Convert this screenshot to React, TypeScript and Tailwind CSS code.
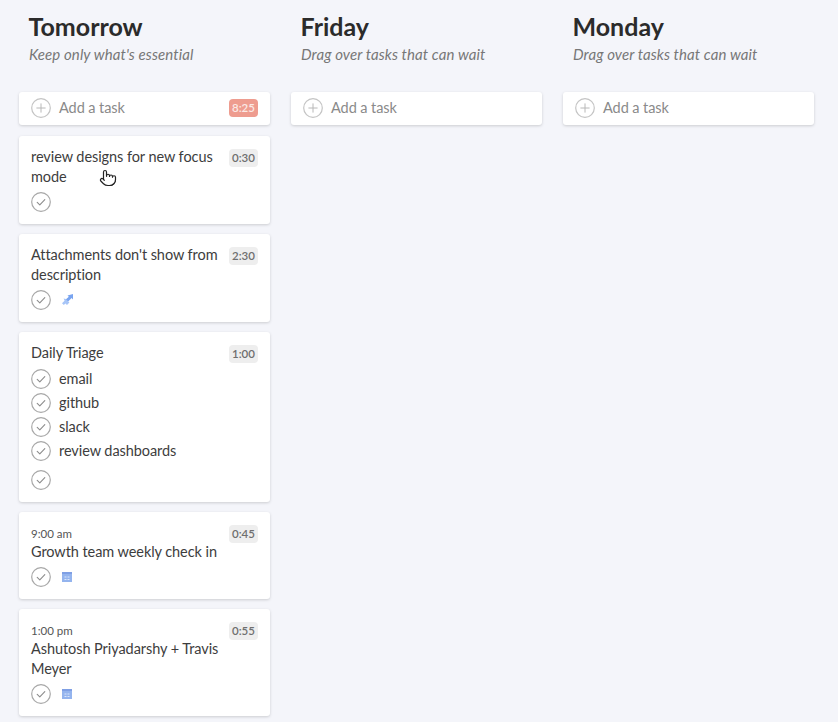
import React from 'react';
import { Pointer } from 'lucide-react';

type Task = {
  title: string;
  time: string;
  at?: string;
  icon?: 'jira' | 'calendar';
  subtasks?: string[];
};

const tomorrow: Task[] = [
  { title: 'review designs for new focus mode', time: '0:30' },
  { title: "Attachments don't show from description", time: '2:30', icon: 'jira' },
  { title: 'Daily Triage', time: '1:00', subtasks: ['email', 'github', 'slack', 'review dashboards'] },
  { title: 'Growth team weekly check in', time: '0:45', at: '9:00 am', icon: 'calendar' },
  { title: 'Ashutosh Priyadarshy + Travis Meyer', time: '0:55', at: '1:00 pm', icon: 'calendar' },
];

function CheckCircle() {
  return (
    <svg width="20" height="20" viewBox="0 0 20 20" fill="none" className="shrink-0">
      <circle cx="10" cy="10" r="9.3" stroke="#a8a8a8" strokeWidth="1.2" />
      <path d="M6.2 10.3l2.6 2.5 5-5.2" stroke="#8c8c8c" strokeWidth="1.1" strokeLinecap="round" strokeLinejoin="round" />
    </svg>
  );
}

function PlusCircle() {
  return (
    <svg width="20" height="20" viewBox="0 0 20 20" fill="none" className="shrink-0">
      <circle cx="10" cy="10" r="9.3" stroke="#c4c4c4" strokeWidth="1.2" />
      <path d="M10 5.8v8.4M5.8 10h8.4" stroke="#b8b8b8" strokeWidth="1" strokeLinecap="round" />
    </svg>
  );
}

function JiraIcon() {
  return (
    <svg width="11" height="11" viewBox="0 0 11 11" className="shrink-0 -mt-[2px]">
      <path d="M5.5 1.5L11 0v5.5L9.6 4 5.6 8 3.4 5.8 6.8 2.8z" fill="#79a4f0" />
      <path d="M1.6 4.6l2.2 0.4 3.6 3.6-2.4 2.4-1.6-1.6L1.8 11 0 9.2l2.6-2.4z" fill="#a7c5f7" />
    </svg>
  );
}

function CalendarIcon() {
  return (
    <svg width="10" height="10" viewBox="0 0 10 10" className="shrink-0">
      <rect width="10" height="10" fill="#94b4ee" />
      <rect width="10" height="2" fill="#7f9fe4" />
      <path d="M2.5 5h2M5.5 5h2M2.5 7.5h2M5.5 7.5h2" stroke="#dbe6fa" strokeWidth="1" />
    </svg>
  );
}

function TaskCard({ task, hovered }: { task: Task; hovered?: boolean }) {
  return (
    <div className="relative rounded-[3px] bg-white px-3 pt-[11px] pb-[12px] shadow-[0_1px_3px_rgba(0,0,0,0.17)]">
      <div className="flex items-start justify-between">
        <div className="w-[192px]">
          {task.at && <div className="mt-[3px] mb-[1px] text-[11.5px] leading-[15px] text-[#555]">{task.at}</div>}
          <div className="text-[14.5px] leading-[20px] tracking-[-0.07px] text-[#3d3d3d] [font-variant-ligatures:none]">{task.title}</div>
        </div>
        <span className="mt-[2px] h-[18px] w-[29px] rounded-[4px] bg-[#eeeeee] text-center text-[11.5px] font-semibold leading-[18px] text-[#6f6f6f]">
          {task.time}
        </span>
      </div>
      {task.subtasks && (
        <div className="mt-[4px] flex flex-col">
          {task.subtasks.map((s) => (
            <div key={s} className="flex h-[24px] items-center gap-2">
              <CheckCircle />
              <span className="text-[14.5px] tracking-[-0.07px] text-[#3d3d3d]">{s}</span>
            </div>
          ))}
        </div>
      )}
      <div className={`${task.subtasks ? 'mt-[7px]' : 'mt-[5px]'} flex items-center gap-[11px]`}>
        <CheckCircle />
        {task.icon === 'jira' && <JiraIcon />}
        {task.icon === 'calendar' && <CalendarIcon />}
      </div>
      {hovered && (
        <Pointer
          size={18}
          strokeWidth={1.6}
          className="absolute left-[80px] top-[33px] fill-white text-[#222]"
        />
      )}
    </div>
  );
}

function Column({ title, subtitle, total, tasks }: { title: string; subtitle: string; total?: string; tasks: Task[] }) {
  return (
    <div className="w-[251px]">
      <div className="h-[92px] pl-[10px] pt-[10px]">
        <h1 className="-ml-[0.5px] text-[25px] font-bold leading-[32px] text-[#2b2b2b]">{title}</h1>
        <p className="mt-[3px] -translate-y-[1px] text-[15px] italic leading-[20px] tracking-[0.1px] text-[#777]">{subtitle}</p>
      </div>
      <div className="flex h-[33px] items-center justify-between rounded-[3px] bg-white px-3 shadow-[0_1px_3px_rgba(0,0,0,0.17)]">
        <div className="-mt-[1px] flex items-center gap-2">
          <PlusCircle />
          <span className="text-[14.5px] tracking-[-0.07px] text-[#8a8a8a]">Add a task</span>
        </div>
        {total && (
          <span className="-mt-[1px] h-[18px] w-[29px] rounded-[4px] bg-[#ee9c8f] text-center text-[11.5px] font-semibold leading-[18px] text-[#fbe9e5]">
            {total}
          </span>
        )}
      </div>
      <div className="mt-[11px] flex flex-col gap-[10px]">
        {tasks.map((t, i) => (
          <TaskCard key={t.title} task={t} hovered={i === 0} />
        ))}
      </div>
    </div>
  );
}

export default function App() {
  return (
    <div className="h-[722px] w-[838px] overflow-hidden bg-[#f4f5fa] font-['Lato',sans-serif]">
      <div className="flex gap-[21px] pl-[19px]">
        <Column title="Tomorrow" subtitle="Keep only what's essential" total="8:25" tasks={tomorrow} />
        <Column title="Friday" subtitle="Drag over tasks that can wait" tasks={[]} />
        <Column title="Monday" subtitle="Drag over tasks that can wait" tasks={[]} />
      </div>
    </div>
  );
}
